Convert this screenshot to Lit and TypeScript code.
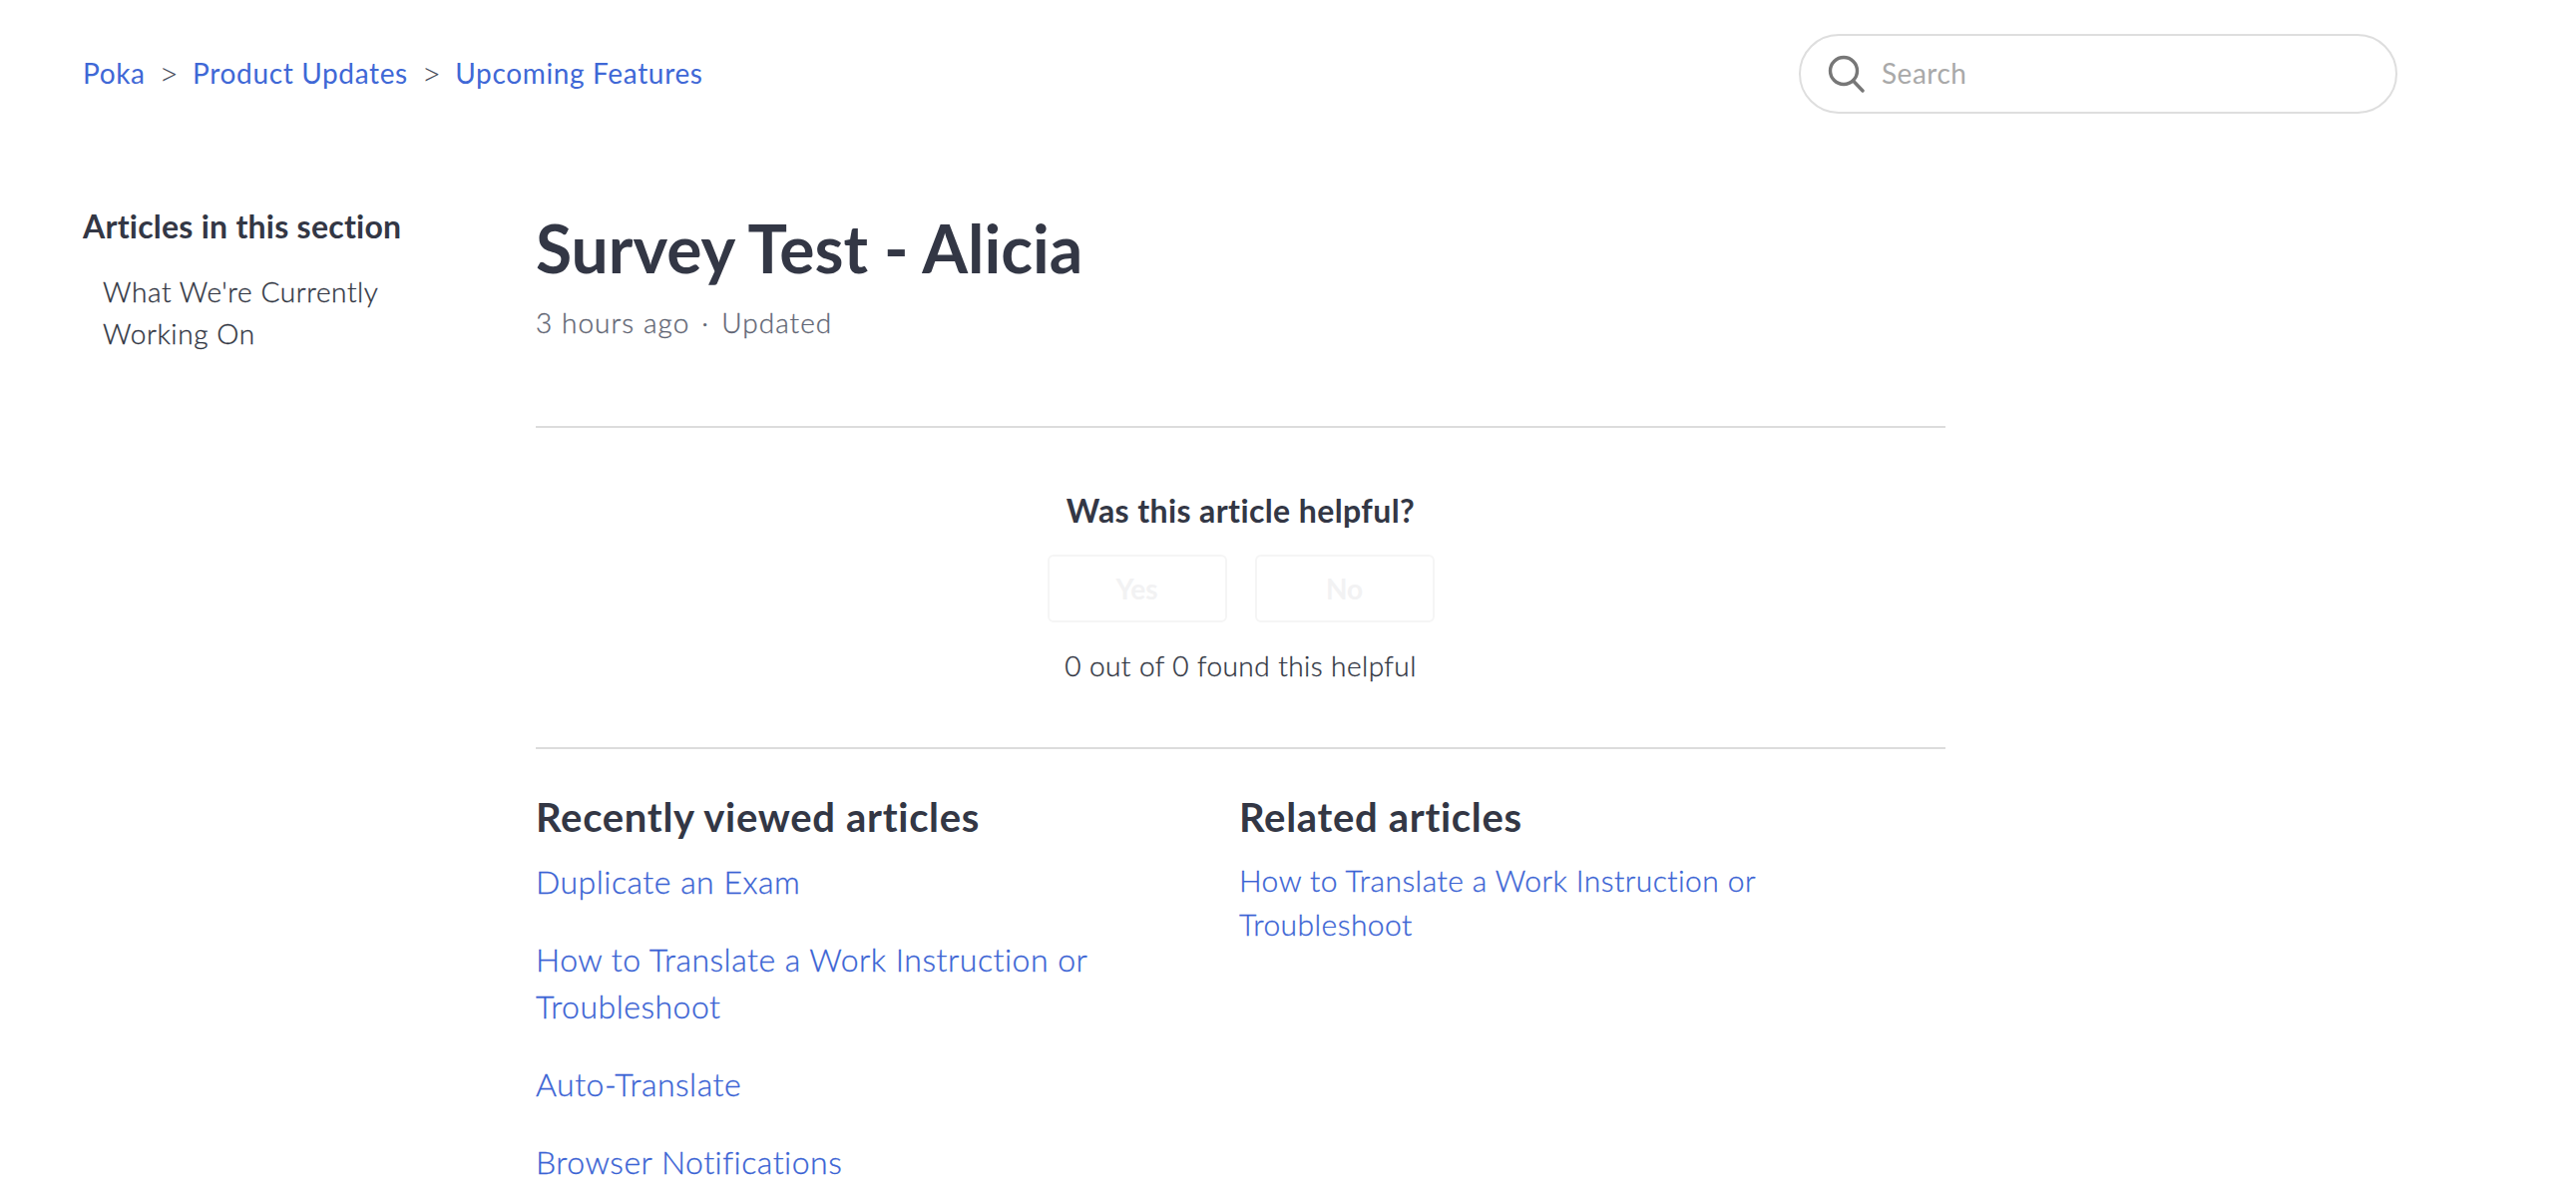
import { LitElement, html, css } from "lit";
import { customElement } from "lit/decorators.js";

@customElement("app-root")
export class AppRoot extends LitElement {
  static styles = css`
    :host { display: block; height: 1200px; overflow: hidden; background: #fff; font-family: Lato, "Noto Sans", sans-serif; font-weight: 300; color: #2f3441; }
    a { color: #3a63d4; text-decoration: none; }
    .side a, .meta, .count, .recent a, .related a { -webkit-text-stroke: 0.3px currentColor; }
    .top { display: flex; justify-content: space-between; align-items: center; padding: 34px 0 0 83px; width: 2320px; box-sizing: content-box; height: 80px; }
    .crumbs { display: flex; align-items: center; font-size: 28px; gap: 13.5px; letter-spacing: 0.65px; margin-top: -2px; font-weight: 400; }
    .crumbs a { color: #3f68d6; }
    .sep { color: #4a505e; font-weight: 300; font-size: 34px; line-height: 34px; }
    .search { box-sizing: border-box; width: 600px; height: 80px; border: 2px solid #dedede; border-radius: 40px; display: flex; align-items: center; padding-left: 27px; gap: 16px; font-size: 28px; letter-spacing: 0.5px; color: #a9a9a9; font-weight: 400; }
    .search span { margin-top: -2px; }
    .search svg { width: 38px; height: 38px; }
    .layout { display: grid; grid-template-columns: 454px 1413px; padding: 92px 0 0 83px; }
    .side h3 { margin: 0; padding-top: 1px; font-size: 32px; font-weight: 700; line-height: 40px; letter-spacing: 0.25px; color: #333745; }
    .side a { display: block; color: #2f3441; font-size: 28px; line-height: 42px; margin: 24px 0 0 20px; width: 330px; letter-spacing: 0.6px; }
    h1 { margin: 0; font-size: 66px; font-weight: 700; line-height: 84px; letter-spacing: -0.02px; color: #333745; padding-top: 1px; }
    .meta { display: flex; gap: 12px; font-size: 28px; color: #5f6573; line-height: 40px; margin-top: 12px; padding-bottom: 84px; border-bottom: 2px solid #dcdcdc; letter-spacing: 1.05px; }
    .vote { display: flex; flex-direction: column; align-items: center; border-bottom: 2px solid #dcdcdc; height: 322px; box-sizing: border-box; padding-top: 63px; }
    .vote h4 { margin: 0; font-size: 32px; font-weight: 700; line-height: 40px; letter-spacing: 0.4px; color: #333745; }
    .btns { display: flex; gap: 28px; margin-top: 24px; }
    .btn { box-sizing: border-box; width: 180px; height: 68px; border: 2px solid #f5f5f5; border-radius: 6px; display: flex; align-items: center; justify-content: center; color: #f2f2f3; font-size: 28px; font-weight: 700; }
    .count { font-size: 28px; line-height: 40px; margin-top: 23px; letter-spacing: 0.45px; }
    .cols { display: grid; grid-template-columns: 705px 1fr; padding-top: 43px; }
    .cols h2 { margin: 0; font-size: 40px; font-weight: 700; line-height: 50px; letter-spacing: 0.7px; color: #333745; }
    .recent a { display: block; font-size: 32px; line-height: 47px; margin-top: 31px; width: 600px; letter-spacing: 0.5px; }
    .recent a:first-of-type { margin-top: 16px; }
    .related a { display: block; font-size: 30px; line-height: 44px; margin-top: 16px; width: 600px; letter-spacing: 0.45px; }
  `;

  render() {
    return html`
      <header class="top">
        <nav class="crumbs">
          <a href="#">Poka</a><span class="sep">&gt;</span>
          <a href="#">Product Updates</a><span class="sep">&gt;</span>
          <a href="#">Upcoming Features</a>
        </nav>
        <div class="search">
          <svg viewBox="0 0 38 38" fill="none" stroke="#777" stroke-width="3.4"><circle cx="16" cy="16" r="13.5"/><path d="M25.5 26 L35 36" stroke-linecap="round"/></svg>
          <span>Search</span>
        </div>
      </header>
      <div class="layout">
        <aside class="side">
          <h3>Articles in this section</h3>
          <a href="#">What We're Currently Working On</a>
        </aside>
        <main>
          <h1>Survey Test - Alicia</h1>
          <div class="meta"><span>3 hours ago</span><span>·</span><span>Updated</span></div>
          <section class="vote">
            <h4>Was this article helpful?</h4>
            <div class="btns"><div class="btn">Yes</div><div class="btn">No</div></div>
            <div class="count">0 out of 0 found this helpful</div>
          </section>
          <section class="cols">
            <div class="recent">
              <h2>Recently viewed articles</h2>
              <a href="#">Duplicate an Exam</a>
              <a href="#">How to Translate a Work Instruction or Troubleshoot</a>
              <a href="#">Auto-Translate</a>
              <a href="#">Browser Notifications</a>
            </div>
            <div class="related">
              <h2>Related articles</h2>
              <a href="#">How to Translate a Work Instruction or Troubleshoot</a>
            </div>
          </section>
        </main>
      </div>
    `;
  }
}
